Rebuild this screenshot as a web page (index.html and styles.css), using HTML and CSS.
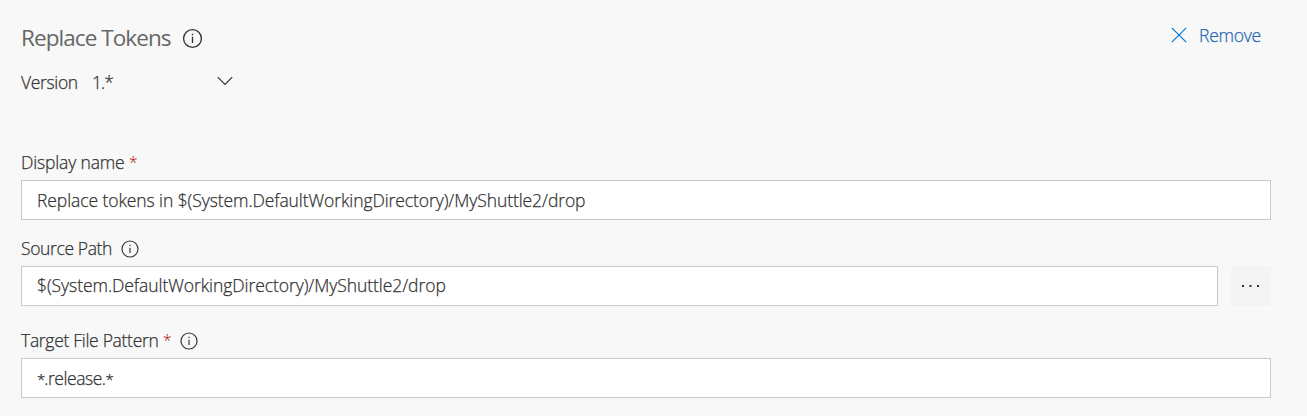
FILE: index.html
```html
<!DOCTYPE html>
<html lang="en">
<head>
<meta charset="utf-8">
<title>Replace Tokens</title>
<link rel="stylesheet" href="styles.css">
</head>
<body>
<main class="panel">
  <header class="header">
    <h1 class="title"><span class="title-text">Replace Tokens</span>
      <svg class="info info-large" viewBox="0 0 20 20"><circle cx="10" cy="10" r="8.500"/><path d="M10 8.300v6M10 5.500v1.500"/></svg>
    </h1>
    <div class="remove">
      <svg class="cross" viewBox="0 0 16 16"><path d="M.8.8l14.4 14.4M15.2.8L.8 15.2"/></svg>
      <span class="remove-text">Remove</span>
    </div>
  </header>
  <div class="version">
    <span class="version-label">Version</span>
    <span class="version-value">1.*</span>
    <svg class="chevron" viewBox="0 0 16 10"><path d="M.8 1.2L8 8.400l7.200-7.200"/></svg>
  </div>
  <section class="field">
    <div class="label"><span class="name-label">Display name</span><span class="required">*</span></div>
    <div class="row"><div class="box"><span class="name-value">Replace tokens in $(System.DefaultWorkingDirectory)/MyShuttle2/drop</span></div></div>
  </section>
  <section class="field field-source">
    <div class="label"><span class="source-label">Source Path</span>
      <svg class="info" viewBox="0 0 20 20"><circle cx="10" cy="10" r="8.900"/><path d="M10 8.500v6M10 5.300v1.500"/></svg>
    </div>
    <div class="row"><div class="box"><span class="source-value">$(System.DefaultWorkingDirectory)/MyShuttle2/drop</span></div>
      <div class="more"><svg class="dots" viewBox="0 0 18 2"><path d="M0 0h2v2H0zM7.500 0h2v2h-2zM15 0h2v2h-2z"/></svg></div>
    </div>
  </section>
  <section class="field field-target">
    <div class="label"><span class="target-label">Target File Pattern</span><span class="required">*</span>
      <svg class="info" viewBox="0 0 20 20"><circle cx="10" cy="10" r="8.900"/><path d="M10 8.500v6M10 5.300v1.500"/></svg>
    </div>
    <div class="row"><div class="box"><span class="target-value"><span class="star">*</span>.release.<span class="star">*</span></span></div></div>
  </section>
</main>
</body>
</html>
```
FILE: styles.css
```css
* { box-sizing: border-box; }
body {
  margin: 0;
  background: #f8f8f8;
  color: #333;
  font: 17.5px/24px "Open Sans", "Noto Sans", sans-serif;
  font-weight: 300;
}
.panel { height: 416px; padding: 22px 36px 0 21px; overflow: hidden; }
.header { display: flex; justify-content: space-between; height: 32px; }
.title {
  display: flex; align-items: center; margin: 0;
  font-size: 22.5px; line-height: 32px; font-weight: 400; color: #666;
}
.title-text { width: 161px; letter-spacing: -0.93px; margin-top: -1px; }
svg { display: block; fill: none; stroke: currentColor; flex: none; }
.info { width: 18px; height: 18px; stroke-width: 1.3; color: #333; }
.info-large { width: 21px; height: 21px; }
.remove { display: flex; align-items: center; gap: 12px; height: 27px; padding-right: 9px; color: #2468b4; }
.remove-text { width: 63px; letter-spacing: -0.25px; margin-top: -1px; }
.cross { width: 16px; height: 16px; stroke-width: 1.2; color: #0078d4; margin-top: -1px; }
.version { display: flex; align-items: center; height: 24px; margin-top: 17px; }
.version-label { width: 71px; letter-spacing: -0.35px; }
.version-value { width: 125px; letter-spacing: -1px; }
.chevron { width: 16px; height: 10px; stroke-width: 1.2; margin-top: -4px; }
.field { margin-top: 56px; }
.field-source { margin-top: 17px; }
.field-target { margin-top: 23px; }
.label { display: flex; align-items: center; height: 24px; }
.name-label { width: 108px; letter-spacing: -0.15px; }
.source-label { width: 100px; letter-spacing: -0.37px; }
.target-label { width: 142px; letter-spacing: -0.3px; }
.label .required { width: 17px; color: #a80000; font-size: 15.5px; -webkit-text-stroke: 0; }
.field:not(.field-target) .required { width: 16px; }
.row { display: flex; gap: 13px; margin-top: 5px; }
.box {
  display: flex; align-items: center; flex: 1; height: 40px; padding-left: 15px;
  border: 1px solid #c8c8c8; background: #fff;
}
.name-value { letter-spacing: -0.085px; }
.source-value { letter-spacing: -0.065px; margin-top: -2px; }
.target-value { letter-spacing: -0.45px; }
.star { font-size: 15px; letter-spacing: -1px; }
.more { display: flex; align-items: center; justify-content: center; width: 40px; height: 40px; background: #f4f4f4; }
.dots { width: 18px; height: 2px; fill: #333; stroke: none; }
.box span, .label span, .version span, .title-text, .remove-text { white-space: nowrap; }
.box span, .label span, .version span, .remove-text { -webkit-text-stroke: 0.25px currentColor; }
.version span, .label span { margin-top: -2px; }
```
